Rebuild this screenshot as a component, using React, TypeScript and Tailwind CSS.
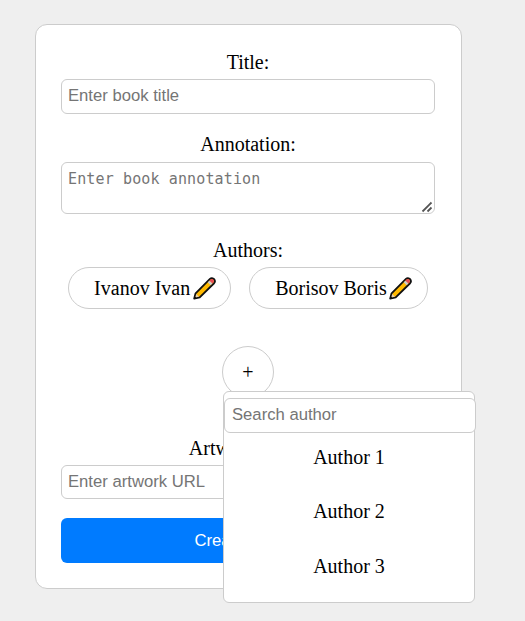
const serif = 'font-["Liberation_Serif",serif]';

const field =
  'block w-full rounded-[6px] border border-[#ccc] bg-white font-["Liberation_Sans",sans-serif] text-[16.67px] leading-[18px] text-black placeholder-[#757575] outline-none';

function Pencil() {
  return (
    <svg width="23" height="23" viewBox="0 0 24 24" className="mt-px mr-[0.5px] ml-[2.5px] block shrink-0">
      <path d="M1.2 22.6 2.7 17 17.7 2Q19.5.4 21.8 2.1 23.9 4.2 22 6.5L7 21.3Z" fill="#ffb900" stroke="#111" strokeWidth="1.9" strokeLinejoin="round" />
      <path d="M17.1 3.8 18.2 2.7Q19.6 1.5 21.2 2.7 22.5 4.2 21.3 5.8L20.2 6.9Z" fill="#e74856" />
      <path d="M15.3 5.6 17.1 3.8 20.2 6.9 18.4 8.7Z" fill="#cccccc" />
      <path d="M2.4 21.4 3.4 17.7 6.3 20.5Z" fill="#e6cfb2" />
      <path d="M1.2 22.7 1.9 20.1 3.8 22Z" fill="#111" />
    </svg>
  );
}

function AuthorChip({ name }: { name: string }) {
  return (
    <div className="flex h-[42px] items-center rounded-[25px] border border-[#ccc] pr-[14px] pl-[25px] whitespace-nowrap">
      <span>{name}</span>
      <Pencil />
    </div>
  );
}

export default function App() {
  return (
    <div className={`${serif} h-[621px] w-[525px] overflow-hidden bg-[#efefef] pt-[24px] pl-[35px] text-[20px] leading-[23px] text-black`}>
      <form className="h-[565px] w-[427px] rounded-[12px] border border-[#ccc] bg-white pt-[25px] pr-[26px] pl-[25px] text-center">
        <label className="block h-[29px] pt-px">Title:</label>
        <input className={`${field} h-[35px] px-[6px] pb-[2px]`} placeholder="Enter book title" />

        <label className="mt-[18px] block h-[30px] pt-px">Annotation:</label>
        <div className="relative">
          <textarea
            className='block h-[52px] w-full resize-none rounded-[6px] border border-[#ccc] bg-white px-[6px] py-[7px] font-["DejaVu_Sans_Mono",monospace] text-[15px] leading-[19px] tracking-[0.13px] placeholder-[#757575] outline-none'
            placeholder="Enter book annotation"
          />
          <svg width="12" height="12" viewBox="0 0 12 12" className="absolute right-[2px] bottom-[1px]">
            <path d="M1.5 10.5 10.5 1.5M6.5 10.5 10.5 6.5" stroke="#555" strokeWidth="1.8" strokeDasharray="9 0" fill="none" />
          </svg>
        </div>

        <div className="mt-[24px] h-[29px] pt-px">Authors:</div>
        <div className="flex justify-center gap-[18px]">
          <AuthorChip name="Ivanov Ivan" />
          <AuthorChip name="Borisov Boris" />
        </div>

        <div className="relative mx-auto mt-[37px] h-[52px] w-[52px]">
          <button type="button" className="block h-[52px] w-[52px] rounded-full border border-[#ccc] bg-white">
            +
          </button>
          <div className="absolute top-[45px] left-px z-10 h-[212px] w-[252px] rounded-[6px] border border-[#ccc] bg-white pt-[6px]">
            <input className={`${field} h-[35px] min-w-[252px] pr-[6px] pb-[2px] pl-[7px]`} placeholder="Search author" />
            <ul className="mt-[13px] flex flex-col gap-[31.4px]">
              <li>Author 1</li>
              <li>Author 2</li>
              <li>Author 3</li>
            </ul>
          </div>
        </div>

        <label className="mt-[38px] block h-[29px] pt-px">Artwork URL:</label>
        <input className={`${field} h-[34px] px-[6px]`} placeholder="Enter artwork URL" />

        <button
          type="button"
          className='mt-[19px] block h-[45px] w-full rounded-[6px] bg-[#007bff] pl-[133.5px] text-left font-["Liberation_Sans",sans-serif] text-[16.67px] text-white'
        >
          Create Book
        </button>
      </form>
    </div>
  );
}
